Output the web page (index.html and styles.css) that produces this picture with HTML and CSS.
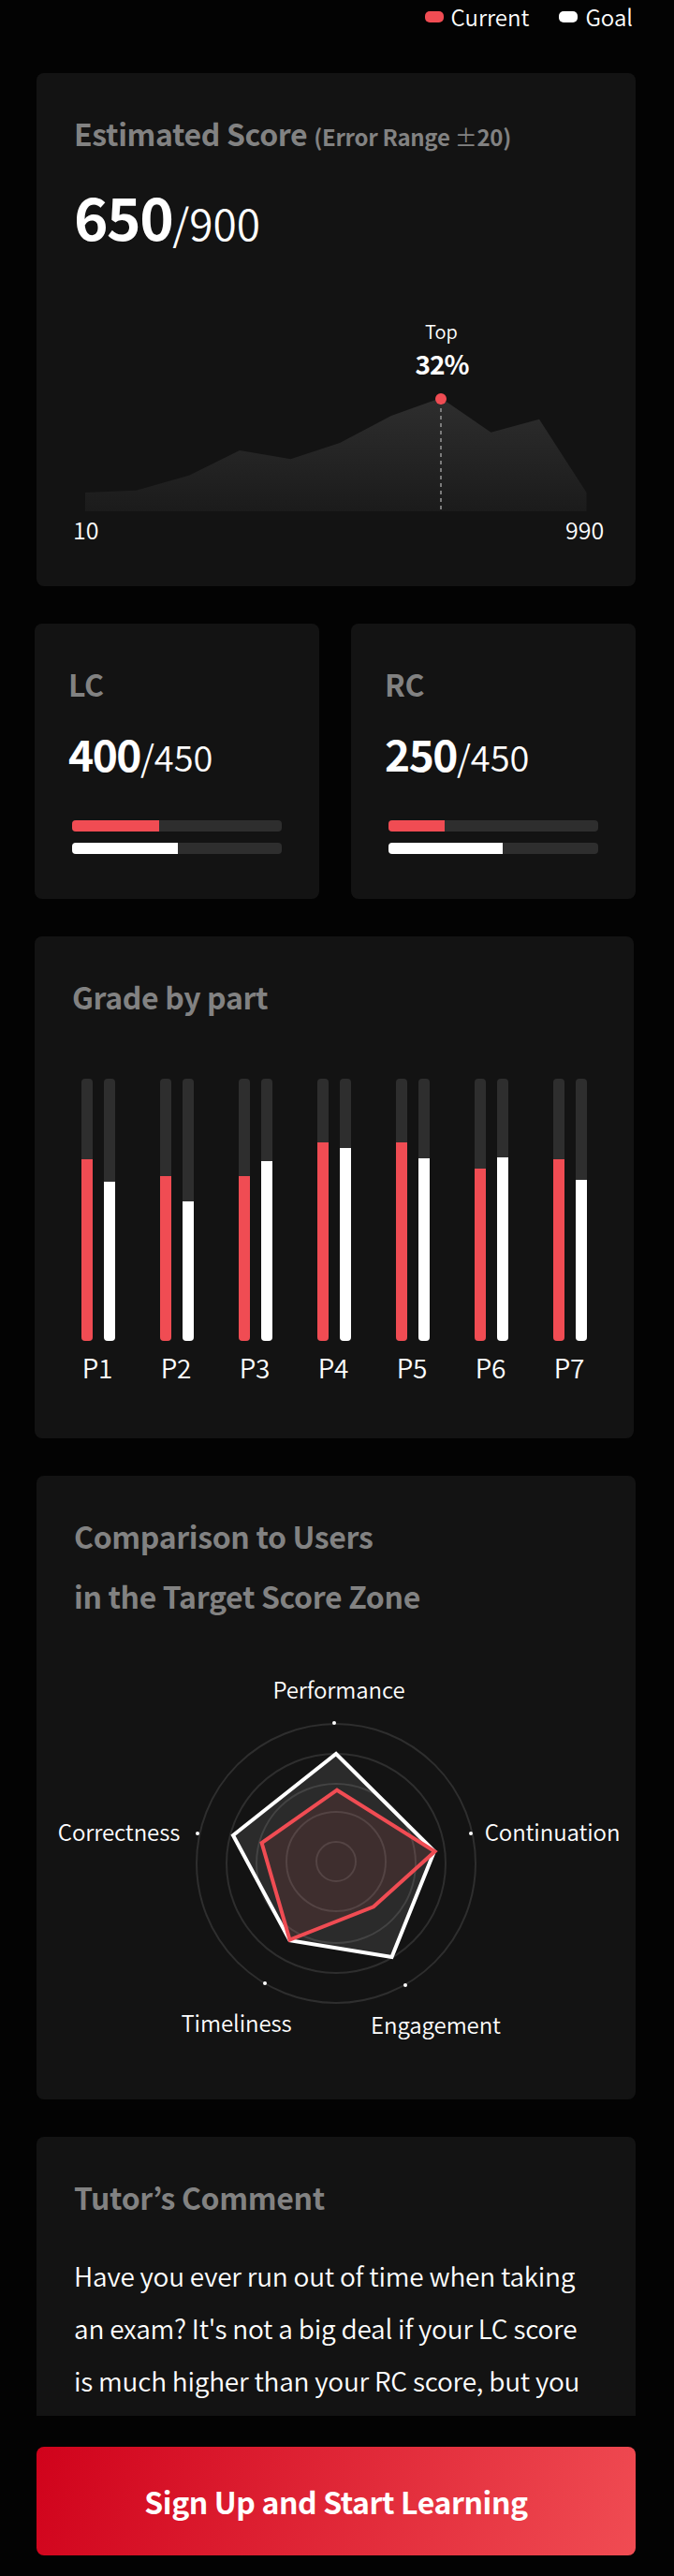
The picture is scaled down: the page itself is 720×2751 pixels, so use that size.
FILE: index.html
```
<!DOCTYPE html>
<html lang="en">
<head>
    <meta charset="UTF-8">
    <meta name="viewport" content="width=device-width, initial-scale=1.0">
    <title>Score Report</title>
    <link rel="stylesheet" href="styles.css">
</head>
<body>
    <div class="page">
        <div class="legend">
            <div class="legend-item"><span class="legend-dot current"></span>Current</div>
            <div class="legend-item"><span class="legend-dot goal"></span>Goal</div>
        </div>

        <!-- Estimated score -->
        <section class="card estimate-card">
            <h2 class="card-title">Estimated Score <small>(Error Range <span class="sign">±</span>20)</small></h2>
            <div class="score score-large"><strong>650</strong><span>/900</span></div>
            <svg class="area-chart" width="558" height="246" viewBox="0 0 558 246">
                <defs>
                    <linearGradient id="areaFill" x1="0" y1="0" x2="0" y2="1">
                        <stop offset="0" stop-color="#2e2e2e"/>
                        <stop offset="1" stop-color="#1b1b1b"/>
                    </linearGradient>
                </defs>
                <polygon fill="url(#areaFill)" points="11,186 65.5,183.7 122,167.7 176,141 230.5,150.3 283,133 338,104 391,85 444.5,121.7 496,107.7 546.5,186 546.5,206 11,206"/>
                <line class="top-line" x1="391" y1="88" x2="391" y2="206"/>
                <circle class="top-dot" cx="391" cy="86" r="6"/>
                <text class="top-label" x="391.5" y="22">Top</text>
                <text class="top-value" x="392" y="60">32%</text>
                <text class="axis-label" x="-2" y="236">10</text>
                <text class="axis-label" x="524" y="236">990</text>
            </svg>
        </section>

        <!-- LC / RC -->
        <div class="skills">
            <section class="card skill-card">
                <h2 class="card-title">LC</h2>
                <div class="score"><strong>400</strong><span>/450</span></div>
                <div class="meters">
                    <div class="meter"><div class="meter-fill current" style="width: 41.5%"></div></div>
                    <div class="meter"><div class="meter-fill goal" style="width: 50.4%"></div></div>
                </div>
            </section>
            <section class="card skill-card">
                <h2 class="card-title">RC</h2>
                <div class="score"><strong>250</strong><span>/450</span></div>
                <div class="meters">
                    <div class="meter"><div class="meter-fill current" style="width: 26.8%"></div></div>
                    <div class="meter"><div class="meter-fill goal" style="width: 54.4%"></div></div>
                </div>
            </section>
        </div>

        <!-- Grade by part -->
        <section class="card parts-card">
            <h2 class="card-title">Grade by part</h2>
            <div class="parts">
                <div class="part">
                    <div class="bars">
                        <div class="bar"><div class="current" style="height: 194px"></div></div>
                        <div class="bar"><div class="goal" style="height: 170px"></div></div>
                    </div>
                    <div class="part-name">P1</div>
                </div>
                <div class="part">
                    <div class="bars">
                        <div class="bar"><div class="current" style="height: 176px"></div></div>
                        <div class="bar"><div class="goal" style="height: 149px"></div></div>
                    </div>
                    <div class="part-name">P2</div>
                </div>
                <div class="part">
                    <div class="bars">
                        <div class="bar"><div class="current" style="height: 176px"></div></div>
                        <div class="bar"><div class="goal" style="height: 192px"></div></div>
                    </div>
                    <div class="part-name">P3</div>
                </div>
                <div class="part">
                    <div class="bars">
                        <div class="bar"><div class="current" style="height: 212px"></div></div>
                        <div class="bar"><div class="goal" style="height: 206px"></div></div>
                    </div>
                    <div class="part-name">P4</div>
                </div>
                <div class="part">
                    <div class="bars">
                        <div class="bar"><div class="current" style="height: 212px"></div></div>
                        <div class="bar"><div class="goal" style="height: 195px"></div></div>
                    </div>
                    <div class="part-name">P5</div>
                </div>
                <div class="part">
                    <div class="bars">
                        <div class="bar"><div class="current" style="height: 184px"></div></div>
                        <div class="bar"><div class="goal" style="height: 196px"></div></div>
                    </div>
                    <div class="part-name">P6</div>
                </div>
                <div class="part">
                    <div class="bars">
                        <div class="bar"><div class="current" style="height: 194px"></div></div>
                        <div class="bar"><div class="goal" style="height: 172px"></div></div>
                    </div>
                    <div class="part-name">P7</div>
                </div>
            </div>
        </section>

        <!-- Comparison radar -->
        <section class="card radar-card">
            <h2 class="card-title">Comparison to Users<br>in the Target Score Zone</h2>
            <svg class="radar" width="640" height="420" viewBox="0 0 640 420">
                <g class="rings">
                    <circle cx="320" cy="210" r="149"/>
                    <circle cx="320" cy="210" r="117"/>
                    <circle cx="320" cy="210" r="85"/>
                    <circle cx="320" cy="208" r="53"/>
                    <circle cx="320" cy="208" r="21"/>
                </g>
                <polygon class="radar-goal" points="320,93 425,197 379.5,310 270.5,292.3 210,180"/>
                <polygon class="radar-current" points="321,131.7 425.5,197.3 360,256.3 270.5,291.5 240.6,188"/>
                <g fill="#fff">
                    <circle cx="318" cy="60" r="2"/>
                    <circle cx="464" cy="178" r="2"/>
                    <circle cx="394" cy="340" r="2"/>
                    <circle cx="244" cy="338" r="2"/>
                    <circle cx="172" cy="178" r="2"/>
                </g>
                <g class="radar-labels">
                    <text x="323" y="34">Performance</text>
                    <text x="551" y="186">Continuation</text>
                    <text x="426.5" y="392">Engagement</text>
                    <text x="213.5" y="390">Timeliness</text>
                    <text x="88" y="186">Correctness</text>
                </g>
            </svg>
        </section>

        <!-- Comment, cut off by the sign up bar -->
        <section class="card comment-card">
            <h2 class="card-title">Tutor’s Comment</h2>
            <p class="comment">Have you ever run out of time when taking<br>an exam? It's not a big deal if your LC score<br>is much higher than your RC score, but you</p>
        </section>

        <div class="signup-bar">
            <a class="signup-button">Sign Up and Start Learning</a>
        </div>
    </div>
</body>
</html>
```
FILE: styles.css
```
* {
    margin: 0;
    padding: 0;
    box-sizing: border-box;
}

body {
    font-family: 'Noto Sans CJK KR', 'Noto Sans', sans-serif;
    font-weight: 350;
    background: #030303;
    color: #fff;
}

.page {
    width: 720px;
    height: 2751px;
    padding: 0 41px 0 39px;
    overflow: hidden;
}

.current {
    background: #f04c53;
}

.goal {
    background: #fff;
}

/* Legend */
.legend {
    display: flex;
    justify-content: flex-end;
    gap: 32px;
    height: 78px;
    padding-right: 3px;
    font-size: 24px;
    line-height: 36px;
}

.legend-item {
    display: flex;
    height: 36px;
    align-items: center;
}

.legend-dot {
    width: 20px;
    height: 12px;
    margin-right: 8px;
    border-radius: 5px;
}

/* Cards */
.card {
    margin-bottom: 40px;
    padding: 41px 40px 0;
    background: #131313;
    border-radius: 8px;
}

.card-title {
    font-size: 32px;
    font-weight: 700;
    line-height: 46px;
    letter-spacing: -0.35px;
    color: #828282;
    white-space: nowrap;
}

.card-title small {
    font-size: 24px;
    line-height: 0;
    letter-spacing: -0.3px;
}

.card-title .sign {
    font-weight: 400;
}

.score {
    height: 56px;
    margin-top: 23px;
    font-size: 46px;
    line-height: 56px;
    white-space: nowrap;
}

.score strong {
    font-weight: 700;
    letter-spacing: -1.5px;
}

.score span {
    font-size: 38px;
    line-height: 0;
}

.score-large {
    height: 72px;
    margin-top: 29px;
    font-size: 62px;
    line-height: 72px;
}

.score-large span {
    font-size: 46px;
}

/* Estimated score */
.estimate-card {
    height: 548px;
}

.area-chart {
    display: block;
    margin: 74px 0 0 1px;
    overflow: visible;
    fill: #fff;
}

.top-line {
    stroke: #7c7c7c;
    stroke-width: 2;
    stroke-dasharray: 4 4;
}

.top-dot {
    fill: #f04c53;
}

.top-label {
    font-size: 20px;
    text-anchor: middle;
}

.top-value {
    font-size: 28px;
    font-weight: 700;
    letter-spacing: -1px;
    text-anchor: middle;
}

.axis-label {
    font-size: 25px;
}

/* LC / RC */
.skills {
    display: grid;
    grid-template-columns: 304px 304px;
    gap: 34px;
    margin: 0 0 40px -2px;
}

.skill-card {
    height: 294px;
    margin-bottom: 0;
    padding: 41px 36px 0;
}

.meters {
    display: flex;
    flex-direction: column;
    gap: 12px;
    margin: 44px 4px 0;
}

.meter {
    height: 12px;
    background: #2e2e2e;
    border-radius: 4px;
    overflow: hidden;
}

.meter-fill {
    height: 100%;
}

/* Grade by part */
.parts-card {
    height: 536px;
    margin-left: -2px;
    margin-right: 2px;
}

.parts {
    display: flex;
    gap: 48px;
    margin: 65px 0 0 10px;
}

.part {
    width: 36px;
}

.bars {
    display: flex;
    gap: 12px;
    height: 280px;
}

.bar {
    display: flex;
    align-items: flex-end;
    width: 12px;
    background: #2e2e2e;
    border-radius: 4px;
    overflow: hidden;
}

.bar div {
    width: 100%;
}

.part-name {
    margin: 8px 1px 0 -1px;
    font-size: 28px;
    line-height: 40px;
    letter-spacing: -0.3px;
    text-align: center;
    white-space: nowrap;
}

/* Comparison radar */
.radar-card {
    height: 666px;
    padding: 32px 0 0;
}

.radar-card .card-title {
    padding: 0 40px;
    line-height: 64px;
}

.radar {
    display: block;
    margin-top: 44px;
}

.rings circle {
    fill: none;
    stroke: #2e2e2e;
    stroke-width: 2;
}

.radar-goal,
.radar-current {
    stroke-width: 4;
}

.radar-goal {
    fill: rgba(255, 255, 255, 0.1);
    stroke: #fff;
}

.radar-current {
    fill: rgba(240, 76, 83, 0.1);
    stroke: #f04c53;
}

.radar-labels {
    fill: #fff;
    font-size: 24px;
    letter-spacing: -0.1px;
    text-anchor: middle;
}

/* Tutor's comment */
.comment-card {
    height: 298px;
    margin-bottom: 0;
    border-radius: 8px 8px 0 0;
}

.comment {
    margin-top: 33px;
    font-size: 28px;
    line-height: 56px;
    letter-spacing: -0.22px;
    white-space: nowrap;
}

/* Sign up */
.signup-bar {
    padding-top: 33px;
}

.signup-button {
    display: block;
    height: 116px;
    border-radius: 8px;
    background: linear-gradient(110deg, #d0021b, #f04c53);
    font-size: 32px;
    font-weight: 700;
    line-height: 116px;
    letter-spacing: -0.4px;
    text-align: center;
}
```
